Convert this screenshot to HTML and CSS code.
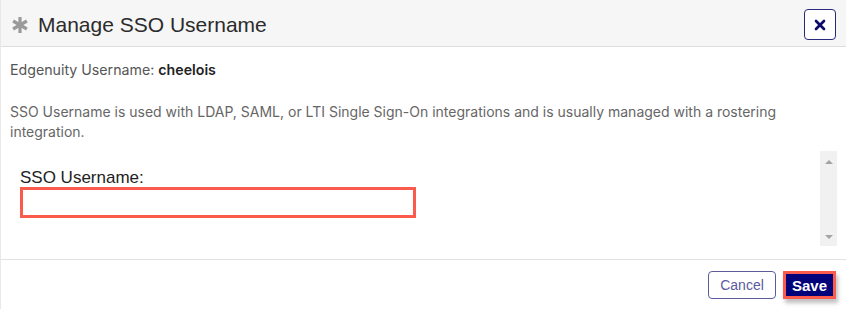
FILE: index.html
```html
<!DOCTYPE html>
<html>
<head>
<meta charset="utf-8">
<link rel="stylesheet" href="styles.css">
</head>
<body>
<div class="modal">
  <div class="header">
    <svg class="star" width="18" height="18" viewBox="0 0 18 18">
      <g stroke="#9a9a9a" stroke-width="3.2" stroke-linecap="butt">
        <line x1="9" y1="1" x2="9" y2="17"/>
        <line x1="2.1" y1="5" x2="15.9" y2="13"/>
        <line x1="2.1" y1="13" x2="15.9" y2="5"/>
      </g>
    </svg>
    <h1 class="title">Manage SSO Username</h1>
    <button class="close" aria-label="Close">
      <svg width="12" height="12" viewBox="0 0 12 12"><g stroke="#0b0b6b" stroke-width="2.6" stroke-linecap="round"><line x1="2" y1="2" x2="10" y2="10"/><line x1="10" y1="2" x2="2" y2="10"/></g></svg>
    </button>
  </div>
  <div class="body">
    <p class="line">Edgenuity Username: <b>cheelois</b></p>
    <p class="desc">SSO Username is used with LDAP, SAML, or LTI Single Sign-On integrations and is usually managed with a rostering integration.</p>
    <div class="scroll">
      <div class="scroll-content">
        <label class="label">SSO Username:</label>
        <div class="input"></div>
      </div>
      <div class="scrollbar">
        <span class="arrow up"></span>
        <span class="arrow down"></span>
      </div>
    </div>
  </div>
  <div class="footer">
    <button class="btn cancel">Cancel</button>
    <div class="save-ring"><button class="btn save">Save</button></div>
  </div>
</div>
</body>
</html>
```

FILE: styles.css
```css
* { box-sizing: border-box; }
html, body { margin: 0; padding: 0; background: #fff; }
body { width: 846px; height: 309px; overflow: hidden; font-family: Inter, "Liberation Sans", sans-serif; }
.modal { width: 846px; height: 309px; border-left: 1px solid #e8e8e8; display: flex; flex-direction: column; }
.header { height: 47px; background: #f6f6f6; border-bottom: 1px solid #dedede; display: flex; align-items: center; padding: 3px 10px 0 10px; }
.star { flex: none; margin-top: 0; }
.title { margin: 0 0 0 9px; font-family: "Liberation Sans", Arial, sans-serif; font-weight: 400; font-size: 21px; color: #2b2b2b; flex: 1; }
.close { width: 32px; height: 31px; border: 1px solid #2a2a7a; border-radius: 4px; background: #fff; display: flex; align-items: center; justify-content: center; padding: 0; margin-top: 0; }
.body { flex: 1; padding: 0 9px 0 9px; }
.line { margin: 13px 0 0 0; font-size: 14.2px; line-height: 20px; color: #555; }
.line b { color: #222; font-weight: 600; }
.desc { margin: 22px 0 0 0; font-size: 14px; line-height: 20px; color: #666; padding-right: 40px; }
.scroll { margin-top: 9px; height: 95px; display: flex; }
.scroll-content { flex: 1; padding: 18px 0 0 10px; }
.label { display: block; font-family: "Liberation Sans", Arial, sans-serif; font-size: 17px; color: #222; line-height: 18px; }
.input { width: 396px; height: 31px; border: 3px solid #fb5b4d; margin-top: 0; background: #fff; }
.scrollbar { width: 17px; background: #f1f1f1; display: flex; flex-direction: column; justify-content: space-between; align-items: center; padding: 9px 0 7px; }
.arrow { width: 0; height: 0; border-left: 4px solid transparent; border-right: 4px solid transparent; }
.arrow.up { border-bottom: 4px solid #a3a3a3; }
.arrow.down { border-top: 4px solid #a3a3a3; }
.footer { height: 50px; border-top: 1px solid #e2e2e2; display: flex; justify-content: flex-end; align-items: center; padding: 1px 10px 0 0; gap: 7px; }
.btn { font-family: "Liberation Sans", Arial, sans-serif; font-size: 14px; height: 28px; border-radius: 4px; padding: 0 11px; }
.cancel { background: #fff; color: #5a5aa0; border: 1px solid #5c5c9c; width: 68px; }
.save-ring { border: 3px solid #fb5b4d; box-shadow: 2px 4px 4px rgba(0,0,0,0.25); }
.save { background: #02027a; color: #fff; font-weight: 700; border: 0; border-radius: 0; height: 22px; width: 47px; padding: 0; font-size: 15px; display: block; }
```
